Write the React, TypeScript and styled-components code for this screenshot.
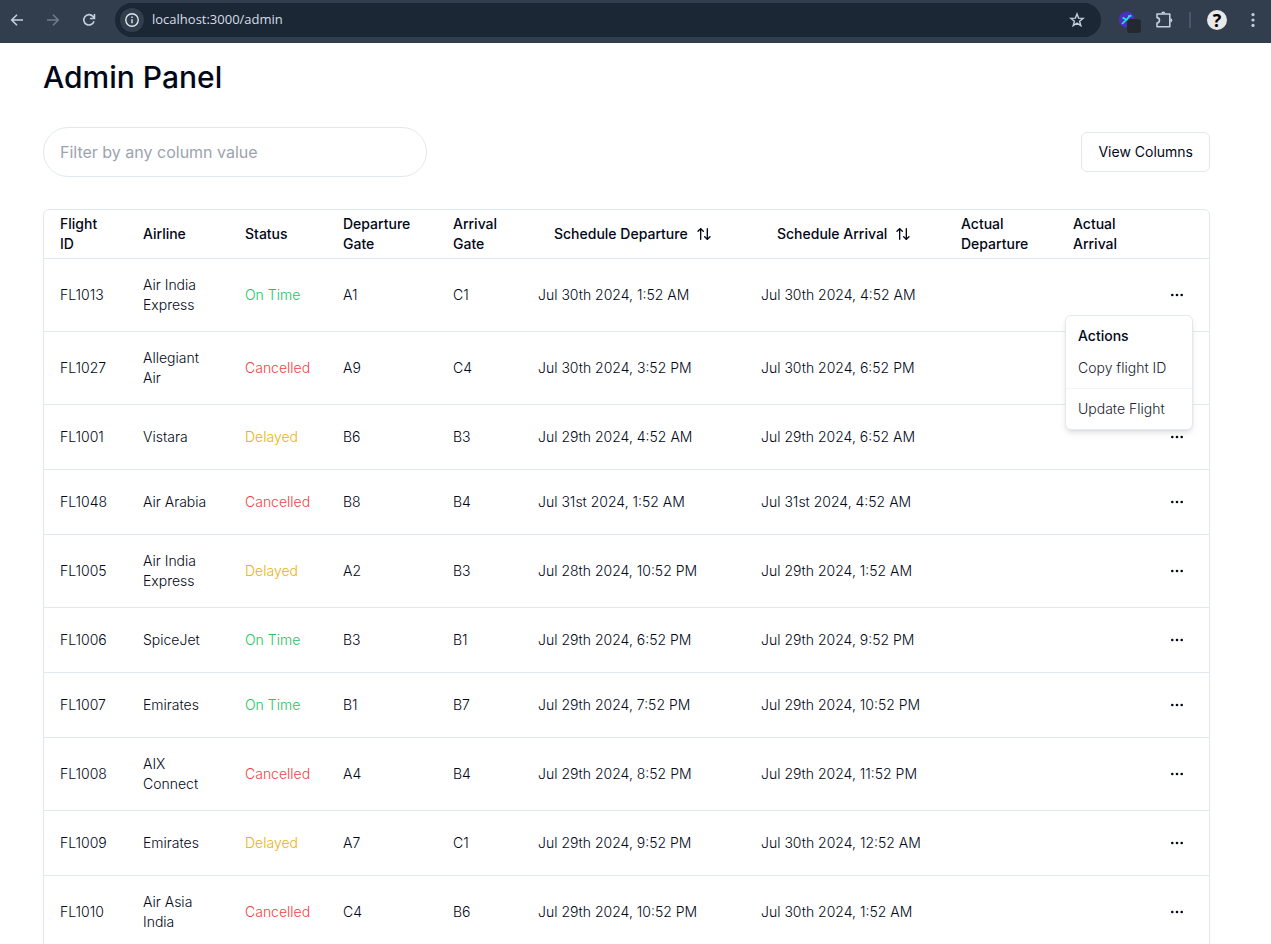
import React, { useState } from 'react';
import styled, { createGlobalStyle } from 'styled-components';
import { ArrowUpDown } from 'lucide-react';

const GlobalStyle = createGlobalStyle`
  *, *::before, *::after { box-sizing: border-box; }
  body {
    margin: 0;
    background: #fff;
    color: #020817;
    font-family: Inter, "Liberation Sans", sans-serif;
    font-size: 14px;
    line-height: 20px;
  }
  button, input { font: inherit; color: inherit; }
  button { cursor: pointer; }
`;

const Shell = styled.div`
  display: flex;
  flex-direction: column;
  height: 100vh;
`;

const Toolbar = styled.header`
  display: flex;
  align-items: center;
  flex: none;
  height: 43px;
  padding: 0 8px 4px 7px;
  background: #323d4d;
  color: #c3cede;
`;

const ToolButton = styled.button<{ $dim?: boolean; $gap?: number }>`
  display: flex;
  align-items: center;
  justify-content: center;
  flex: none;
  width: 20px;
  height: 20px;
  margin-right: ${(p) => p.$gap ?? 16}px;
  padding: 0;
  border: 0;
  background: none;
  color: ${(p) => (p.$dim ? '#707b8a' : 'inherit')};
`;

const AddressBar = styled.div`
  display: flex;
  align-items: center;
  flex: 1;
  min-width: 0;
  height: 34px;
  padding: 0 14px 0 5px;
  border-radius: 17px;
  background: #1c2735;
`;

const SiteInfo = styled.button`
  display: flex;
  align-items: center;
  justify-content: center;
  flex: none;
  width: 24px;
  height: 24px;
  margin-right: 8px;
  padding: 0;
  border: 0;
  border-radius: 50%;
  background: #323d4d;
`;

const UrlInput = styled.input`
  flex: 1;
  min-width: 0;
  padding: 0 0 2px;
  border: 0;
  outline: 0;
  background: none;
  color: #d5dde8;
  font-family: "Open Sans", "Noto Sans", sans-serif;
  font-size: 13px;
`;

const Extensions = styled.div`
  display: flex;
  align-items: center;
  flex: none;
  padding-left: 18px;
`;

const Divider = styled.span`
  width: 2px;
  height: 16px;
  margin-right: 16px;
  background: #4b5768;
`;

const Avatar = styled.button`
  width: 20px;
  height: 20px;
  margin-right: 16px;
  padding: 0;
  border: 0;
  border-radius: 50%;
  background: #e8e8e8;
  color: #000;
  font-family: "Open Sans", sans-serif;
  font-size: 18px;
  font-weight: 700;
  line-height: 20px;
`;

const Page = styled.main`
  flex: 1;
  min-height: 0;
  overflow: auto;
  scrollbar-width: none;
  padding: 16px 61px 0 43px;
`;

const Title = styled.h1`
  margin: 0 0 32px;
  font-size: 30px;
  font-weight: 500;
  line-height: 36px;
`;

const Controls = styled.div`
  display: flex;
  align-items: center;
  justify-content: space-between;
  margin-bottom: 32px;
`;

const FilterInput = styled.input`
  width: 384px;
  height: 50px;
  padding: 0 16px;
  border: 1px solid #e2e8f0;
  border-radius: 25px;
  background: #fff;
  font-size: 16px;
  &::placeholder { color: #9ca3af; opacity: 1; }
`;

const OutlineButton = styled.button`
  height: 40px;
  padding: 0 16px;
  border: 1px solid #e2e8f0;
  border-radius: 6px;
  background: #fff;
`;

const TableFrame = styled.div`
  border: 1px solid #e2e8f0;
  border-radius: 6px;
`;

const Table = styled.table`
  width: 100%;
  table-layout: fixed;
  border-collapse: separate;
  border-spacing: 0;
`;

const HeadCell = styled.th<{ $width: number }>`
  width: ${(p) => p.$width}px;
  height: 49px;
  padding: 0 16px;
  border-bottom: 1px solid #e2e8f0;
  text-align: left;
  vertical-align: middle;
  font-weight: 500;
`;

const SortButton = styled.button`
  display: flex;
  align-items: center;
  gap: 8px;
  height: 40px;
  padding: 0 16px;
  border: 0;
  background: none;
  white-space: nowrap;
`;

const Cell = styled.td`
  padding: 16px;
  border-bottom: 1px solid #e2e8f0;
  vertical-align: middle;
  font-weight: 300;
`;

type Status = 'On Time' | 'Cancelled' | 'Delayed';

const statusColors: Record<Status, string> = {
  'On Time': '#22c55e',
  Cancelled: '#ef4444',
  Delayed: '#eab308',
};

const StatusText = styled.span<{ $status: Status }>`
  color: ${(p) => statusColors[p.$status]};
`;

const ActionsAnchor = styled.div`
  position: relative;
  width: 32px;
  height: 32px;
`;

const RowButton = styled.button`
  display: flex;
  align-items: center;
  justify-content: center;
  width: 32px;
  height: 32px;
  padding: 0;
  border: 0;
  background: none;
`;

const Menu = styled.div`
  position: absolute;
  top: 100%;
  right: 0;
  z-index: 1;
  width: 128px;
  margin-top: 4px;
  padding: 4px;
  border: 1px solid #e2e8f0;
  border-radius: 6px;
  background: #fff;
  box-shadow: 0 4px 6px -1px rgba(0, 0, 0, 0.1), 0 2px 4px -2px rgba(0, 0, 0, 0.1);
`;

const MenuLabel = styled.div`
  padding: 6px 8px;
  font-weight: 500;
`;

const MenuItem = styled.button`
  display: block;
  width: 100%;
  padding: 6px 8px;
  border: 0;
  background: none;
  color: #20242f;
  text-align: left;
  white-space: nowrap;
  font-weight: 300;
`;

const MenuSeparator = styled.hr`
  height: 1px;
  margin: 4px -4px;
  border: 0;
  background: #f1f5f9;
`;

interface Column {
  label: string;
  width: number;
  sortable?: boolean;
}

const columns: Column[] = [
  { label: 'Flight ID', width: 83 },
  { label: 'Airline', width: 102 },
  { label: 'Status', width: 98 },
  { label: 'Departure Gate', width: 110 },
  { label: 'Arrival Gate', width: 85 },
  { label: 'Schedule Departure', width: 223, sortable: true },
  { label: 'Schedule Arrival', width: 200, sortable: true },
  { label: 'Actual Departure', width: 112 },
  { label: 'Actual Arrival', width: 88 },
  { label: '', width: 64 },
];

interface Flight {
  id: string;
  airline: string;
  status: Status;
  from: string;
  to: string;
  departure: string;
  arrival: string;
}

const flights: Flight[] = [
  { id: 'FL1013', airline: 'Air India Express', status: 'On Time', from: 'A1', to: 'C1', departure: 'Jul 30th 2024, 1:52 AM', arrival: 'Jul 30th 2024, 4:52 AM' },
  { id: 'FL1027', airline: 'Allegiant Air', status: 'Cancelled', from: 'A9', to: 'C4', departure: 'Jul 30th 2024, 3:52 PM', arrival: 'Jul 30th 2024, 6:52 PM' },
  { id: 'FL1001', airline: 'Vistara', status: 'Delayed', from: 'B6', to: 'B3', departure: 'Jul 29th 2024, 4:52 AM', arrival: 'Jul 29th 2024, 6:52 AM' },
  { id: 'FL1048', airline: 'Air Arabia', status: 'Cancelled', from: 'B8', to: 'B4', departure: 'Jul 31st 2024, 1:52 AM', arrival: 'Jul 31st 2024, 4:52 AM' },
  { id: 'FL1005', airline: 'Air India Express', status: 'Delayed', from: 'A2', to: 'B3', departure: 'Jul 28th 2024, 10:52 PM', arrival: 'Jul 29th 2024, 1:52 AM' },
  { id: 'FL1006', airline: 'SpiceJet', status: 'On Time', from: 'B3', to: 'B1', departure: 'Jul 29th 2024, 6:52 PM', arrival: 'Jul 29th 2024, 9:52 PM' },
  { id: 'FL1007', airline: 'Emirates', status: 'On Time', from: 'B1', to: 'B7', departure: 'Jul 29th 2024, 7:52 PM', arrival: 'Jul 29th 2024, 10:52 PM' },
  { id: 'FL1008', airline: 'AIX Connect', status: 'Cancelled', from: 'A4', to: 'B4', departure: 'Jul 29th 2024, 8:52 PM', arrival: 'Jul 29th 2024, 11:52 PM' },
  { id: 'FL1009', airline: 'Emirates', status: 'Delayed', from: 'A7', to: 'C1', departure: 'Jul 29th 2024, 9:52 PM', arrival: 'Jul 30th 2024, 12:52 AM' },
  { id: 'FL1010', airline: 'Air Asia India', status: 'Cancelled', from: 'C4', to: 'B6', departure: 'Jul 29th 2024, 10:52 PM', arrival: 'Jul 30th 2024, 1:52 AM' },
];

const Stroke = ({ d, width = 1.6, size = 16 }: { d: string; width?: number; size?: number }) => (
  <svg width={size} height={size} viewBox={`0 0 ${size} ${size}`} fill="none" stroke="currentColor" strokeWidth={width}>
    <path d={d} />
  </svg>
);

const BrowserBar = () => (
  <Toolbar>
    <ToolButton aria-label="Back"><Stroke d="M14 8H3M8 2.7 2.7 8 8 13.3" /></ToolButton>
    <ToolButton aria-label="Forward" $dim><Stroke d="M2 8h11M8 2.7 13.3 8 8 13.3" /></ToolButton>
    <ToolButton aria-label="Reload"><Stroke d="M13 9.2A5.2 5.2 0 1 1 11.9 4.4L13.3 6M13.5 2v4.5H9" /></ToolButton>
    <AddressBar>
      <SiteInfo aria-label="Site information">
        <svg width="16" height="16" viewBox="0 0 16 16" fill="none" stroke="#dfe6ee" strokeWidth="1.4">
          <circle cx="8" cy="8" r="6.2" />
          <path d="M8 7.2v4M8 4.6v1.5" />
        </svg>
      </SiteInfo>
      <UrlInput aria-label="Address" defaultValue="localhost:3000/admin" />
      <ToolButton aria-label="Bookmark" $gap={0}>
        <Stroke d="m8 1.9 1.6 4.2 4.6.3-3.6 2.9 1.2 4.4L8 11.2l-3.8 2.5 1.2-4.4-3.6-2.9 4.6-.3z" width={1.4} />
      </ToolButton>
    </AddressBar>
    <Extensions>
      <ToolButton aria-label="Flight extension" $gap={15}>
        <svg width="24" height="24" viewBox="0 0 24 24" overflow="visible">
          <circle cx="9.8" cy="11.5" r="8" fill="#4a2fc0" />
          <path d="m5 16 3-3 6-6M5.5 9.5 9 11.5l4 1M11 8h3.5" fill="none" stroke="#21e6dc" strokeWidth="1.7" />
          <rect x="10" y="11" width="14" height="14" rx="3" fill="#24292f" />
        </svg>
      </ToolButton>
      <ToolButton aria-label="Extensions" $gap={15}>
        <svg width="18" height="18" viewBox="0 0 18 18" fill="none" stroke="currentColor" strokeWidth="1.6">
          <path d="M2 3h12.8v12.7H2v-3.7c3.3-.4 3.3-5 0-5.4z" strokeLinejoin="round" />
          <path d="M6.2 2.5a2 2 0 0 1 4.2 0zM15.3 7.2a2 2 0 0 1 0 4.2z" fill="currentColor" stroke="none" />
        </svg>
      </ToolButton>
      <Divider />
      <Avatar aria-label="Profile">?</Avatar>
      <ToolButton aria-label="Browser menu" $gap={0}>
        <svg width="16" height="16" viewBox="0 0 16 16" fill="currentColor">
          <circle cx="8" cy="2.6" r="1.6" />
          <circle cx="8" cy="8" r="1.6" />
          <circle cx="8" cy="13.4" r="1.6" />
        </svg>
      </ToolButton>
    </Extensions>
  </Toolbar>
);

const Dots = () => (
  <svg width="16" height="16" viewBox="0 0 16 16" fill="currentColor">
    <circle cx="3.3" cy="8" r="1.3" />
    <circle cx="8" cy="8" r="1.3" />
    <circle cx="12.7" cy="8" r="1.3" />
  </svg>
);

export default function App() {
  const [openId, setOpenId] = useState<string | null>('FL1013');
  return (
    <Shell>
      <GlobalStyle />
      <BrowserBar />
      <Page>
        <Title>Admin Panel</Title>
        <Controls>
          <FilterInput aria-label="Filter flights" placeholder="Filter by any column value" />
          <OutlineButton>View Columns</OutlineButton>
        </Controls>
        <TableFrame>
          <Table>
            <thead>
              <tr>
                {columns.map((c) => (
                  <HeadCell key={c.label} $width={c.width} scope="col">
                    {c.sortable ? (
                      <SortButton>
                        {c.label}
                        <ArrowUpDown size={16} />
                      </SortButton>
                    ) : (
                      c.label
                    )}
                  </HeadCell>
                ))}
              </tr>
            </thead>
            <tbody>
              {flights.map((f) => (
                <tr key={f.id}>
                  <Cell>{f.id}</Cell>
                  <Cell>{f.airline}</Cell>
                  <Cell><StatusText $status={f.status}>{f.status}</StatusText></Cell>
                  <Cell>{f.from}</Cell>
                  <Cell>{f.to}</Cell>
                  <Cell>{f.departure}</Cell>
                  <Cell>{f.arrival}</Cell>
                  <Cell />
                  <Cell />
                  <Cell>
                    <ActionsAnchor>
                      <RowButton
                        aria-label={`Actions for ${f.id}`}
                        aria-expanded={openId === f.id}
                        onClick={() => setOpenId(openId === f.id ? null : f.id)}
                      >
                        <Dots />
                      </RowButton>
                      {openId === f.id && (
                        <Menu>
                          <MenuLabel>Actions</MenuLabel>
                          <MenuItem>Copy flight ID</MenuItem>
                          <MenuSeparator />
                          <MenuItem>Update Flight</MenuItem>
                        </Menu>
                      )}
                    </ActionsAnchor>
                  </Cell>
                </tr>
              ))}
            </tbody>
          </Table>
        </TableFrame>
      </Page>
    </Shell>
  );
}
